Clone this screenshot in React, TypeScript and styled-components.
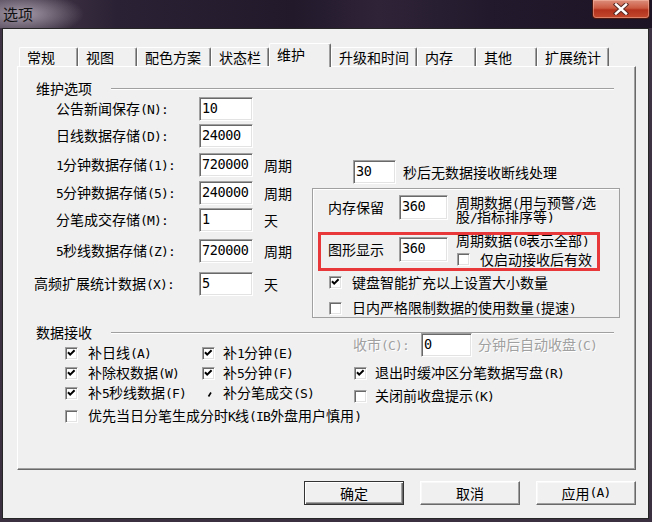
import React from "react";
import styled, { createGlobalStyle } from "styled-components";

const GlobalStyle = createGlobalStyle`
  html, body { margin: 0; padding: 0; background: #2a2030; }
  body {
    font-family: "Noto Sans CJK SC", "Noto Sans", sans-serif;
    font-size: 14px;
    color: #000;
  }
  * { box-sizing: border-box; }
`;

const Half = styled.span`
  font-family: "DejaVu Sans Mono", "Liberation Mono", monospace;
  font-size: 13px;
  letter-spacing: -0.8px;
`;

function T({ s }: { s: string }) {
  const parts = s.split(/([\x21-\x7e]+)/);
  return (
    <>
      {parts.map((p, i) =>
        /[\x21-\x7e]/.test(p) ? <Half key={i}>{p}</Half> : <React.Fragment key={i}>{p}</React.Fragment>
      )}
    </>
  );
}

const Window = styled.div`
  width: 652px;
  height: 522px;
  display: flex;
  flex-direction: column;
  background: linear-gradient(180deg, #3d3344 0%, #3a3040 100%);
  overflow: hidden;
`;

const TitleBar = styled.div`
  height: 28px;
  flex: none;
  display: flex;
  align-items: flex-start;
  justify-content: space-between;
  background:
    radial-gradient(ellipse 62px 22px at 22px 14px, rgba(175, 165, 178, 0.9), rgba(150, 140, 155, 0) 100%),
    linear-gradient(90deg, #4b4051 0%, #2b2134 18%, #22192b 45%, #2f2338 58%, #221a2c 75%, #1d1526 100%);
`;

const TitleText = styled.div`
  padding: 5px 0 0 3px;
  font-size: 15px;
  line-height: 18px;
  color: #111;
`;

const CloseButton = styled.div`
  width: 58px;
  height: 19px;
  margin-right: 2px;
  display: flex;
  align-items: center;
  justify-content: center;
  background: linear-gradient(180deg, #dc8e7c 0%, #cc5a42 45%, #b3321d 55%, #c4492d 100%);
  border: 1px solid #4a1810;
  border-top: none;
  border-radius: 0 0 4px 4px;
  box-shadow: inset 0 0 0 1px rgba(255, 200, 180, 0.45);
`;

const Client = styled.div`
  flex: 1;
  margin: 0 3px 3px 2px;
  border: 1px solid #262626;
  background: #f0f0f0;
  display: flex;
  flex-direction: column;
`;

const TabStrip = styled.div`
  display: flex;
  align-items: flex-end;
  height: 23px;
  margin: 14px 0 0 16px;
`;

const Tab = styled.div<{ $w: number; $active?: boolean }>`
  width: ${(p) => p.$w}px;
  height: ${(p) => (p.$active ? 24 : 19)}px;
  margin-bottom: ${(p) => (p.$active ? -1 : 0)}px;
  padding: ${(p) => (p.$active ? "3px 0 0 7px" : "2px 0 0 7px")};
  line-height: 14px;
  white-space: nowrap;
  background: #f0f0f0;
  border-top: 1px solid #fff;
  border-left: 1px solid #fff;
  border-right: 1px solid #696969;
  box-shadow: inset -1px 0 #a0a0a0;
  border-radius: 2px 2px 0 0;
  position: relative;
  z-index: ${(p) => (p.$active ? 2 : 0)};
`;

const Panel = styled.div`
  margin-left: 14px;
  width: 619px;
  height: 404px;
  flex: none;
  border-top: 1px solid #fff;
  border-left: 1px solid #fff;
  border-right: 1px solid #696969;
  border-bottom: 1px solid #696969;
  box-shadow: inset -1px -1px #a0a0a0;
  display: flex;
  flex-direction: column;
`;

const SectionHeader = styled.div<{ $mt: number }>`
  display: flex;
  align-items: center;
  gap: 19px;
  height: 14px;
  line-height: 14px;
  margin: ${(p) => p.$mt}px 21px 0 18px;
  white-space: nowrap;
`;

const Rule = styled.div`
  flex: 1;
  height: 2px;
  margin-top: 1px;
  border-top: 1px solid #a0a0a0;
  border-bottom: 1px solid #fff;
`;

const MainArea = styled.div`
  display: flex;
  margin-top: 2px;
`;

const LeftCol = styled.div`
  margin-left: 16px;
  width: 266px;
  display: flex;
  flex-direction: column;
`;

const FieldRow = styled.div<{ $mt: number }>`
  display: grid;
  grid-template-columns: 165px 54px auto;
  align-items: center;
  height: 24px;
  margin-top: ${(p) => p.$mt}px;
`;

const FieldLabel = styled.div<{ $indent: number }>`
  padding-left: ${(p) => p.$indent}px;
  white-space: nowrap;
  line-height: 14px;
`;

const Unit = styled.div`
  margin-left: 11px;
  line-height: 14px;
  white-space: nowrap;
`;

const TextBox = styled.input<{ $w: number; $h?: number }>`
  width: ${(p) => p.$w}px;
  height: ${(p) => p.$h ?? 24}px;
  flex: none;
  margin: 0;
  background: #fff;
  border-top: 1px solid #a0a0a0;
  border-left: 1px solid #a0a0a0;
  border-right: 1px solid #fff;
  border-bottom: 1px solid #fff;
  box-shadow: inset 1px 1px #696969, inset -1px -1px #e3e3e3;
  font-family: "DejaVu Sans Mono", "Liberation Mono", monospace;
  font-size: 13.5px;
  letter-spacing: -0.4px;
  color: #000;
  padding: 0 0 3px 2px;
  outline: none;
`;

const RightCol = styled.div`
  margin-left: 12px;
  width: 308px;
  display: flex;
  flex-direction: column;
`;

const TimeoutRow = styled.div`
  margin-top: 63px;
  padding-left: 41px;
  display: flex;
  align-items: center;
  gap: 7px;
  height: 24px;
  white-space: nowrap;
`;

const InnerBox = styled.div`
  margin-top: 4px;
  height: 130px;
  border: 1px solid #a0a0a0;
  box-shadow: inset 1px 1px #fff;
  display: flex;
  flex-direction: column;
`;

const BoxRow = styled.div<{ $mt: number }>`
  position: relative;
  display: flex;
  align-items: flex-start;
  margin-top: ${(p) => p.$mt}px;
  padding-left: 15px;
`;

const BoxLabel = styled.div`
  width: 71px;
  line-height: 25px;
  white-space: nowrap;
`;

const NoteBlock = styled.div<{ $mt: number }>`
  margin-left: 8px;
  margin-top: ${(p) => p.$mt}px;
  line-height: 13px;
  white-space: nowrap;
`;

const NoteCheck = styled.div`
  display: flex;
  align-items: center;
  gap: 10px;
  height: 17px;
  margin-top: 3px;
  padding-left: 1px;
`;

const Highlight = styled.div`
  position: absolute;
  left: 5px;
  top: -5px;
  width: 282px;
  height: 39px;
  border: 3px solid #e8383a;
  pointer-events: none;
`;

const CheckRow = styled.div<{ $mt: number; $pl: number; $gap?: number; $h?: number }>`
  display: flex;
  align-items: center;
  gap: ${(p) => p.$gap ?? 10}px;
  height: ${(p) => p.$h ?? 18}px;
  margin-top: ${(p) => p.$mt}px;
  padding-left: ${(p) => p.$pl}px;
  white-space: nowrap;
  line-height: 14px;
`;

const CheckBoxBox = styled.span`
  width: 13px;
  height: 13px;
  flex: none;
  display: inline-flex;
  background: #fff;
  border-top: 1px solid #a0a0a0;
  border-left: 1px solid #a0a0a0;
  border-right: 1px solid #fff;
  border-bottom: 1px solid #fff;
  box-shadow: inset 1px 1px #696969, inset -1px -1px #e3e3e3;
`;

const TickStub = styled.span`
  width: 13px;
  height: 13px;
  flex: none;
  display: inline-flex;
`;

function CheckBox({ checked }: { checked?: boolean }) {
  return (
    <CheckBoxBox>
      {checked && (
        <svg width="11" height="11" viewBox="0 0 11 11">
          <polyline points="2,4.2 4.2,6.6 8.6,2.2" fill="none" stroke="#000" strokeWidth="2" />
        </svg>
      )}
    </CheckBoxBox>
  );
}

const DataArea = styled.div`
  display: flex;
`;

const DataLeft = styled.div`
  margin-left: 47px;
  width: 288px;
  display: flex;
  flex-direction: column;
  margin-top: 4px;
`;

const CheckGrid = styled.div`
  display: grid;
  grid-template-columns: 137px auto;
  grid-auto-rows: 20px;
`;

const DataRight = styled.div`
  margin-top: -6px;
  display: flex;
  flex-direction: column;
`;

const CloseRow = styled.div`
  display: flex;
  align-items: center;
  height: 24px;
`;

const Disabled = styled.span<{ $w?: number; $ml?: number }>`
  color: #a0a0a0;
  text-shadow: 1px 1px 0 #fff;
  white-space: nowrap;
  line-height: 14px;
  ${(p) => (p.$w ? `width: ${p.$w}px;` : "")}
  margin-left: ${(p) => p.$ml ?? 0}px;
`;

const ButtonBar = styled.div`
  display: flex;
  justify-content: flex-end;
  gap: 16px;
  margin-top: 11px;
  padding-right: 12px;
`;

const Button = styled.div<{ $default?: boolean }>`
  width: 100px;
  height: 24px;
  display: flex;
  align-items: center;
  justify-content: center;
  background: #f0f0f0;
  line-height: 14px;
  border: 1px solid ${(p) => (p.$default ? "#333" : "#696969")};
  ${(p) =>
    p.$default
      ? "box-shadow: inset 1px 1px #fff, inset -1px -1px #696969, inset -2px -2px #a0a0a0;"
      : "border-top-color: #fff; border-left-color: #fff; box-shadow: inset -1px -1px #a0a0a0, inset 1px 1px #f8f8f8;"}
`;

const tabs = [
  { t: "常规", w: 59 },
  { t: "视图", w: 59 },
  { t: "配色方案", w: 74 },
  { t: "状态栏", w: 58 },
  { t: "维护", w: 62, active: true },
  { t: "升级和时间", w: 86 },
  { t: "内存", w: 59 },
  { t: "其他", w: 61 },
  { t: "扩展统计", w: 72 },
];

const fields = [
  { label: "公告新闻保存(N):", value: "10", unit: "", mt: 0, indent: 22 },
  { label: "日线数据存储(D):", value: "24000", unit: "", mt: 3, indent: 22 },
  { label: "1分钟数据存储(1):", value: "720000", unit: "周期", mt: 5, indent: 22 },
  { label: "5分钟数据存储(5):", value: "240000", unit: "周期", mt: 4, indent: 22 },
  { label: "分笔成交存储(M):", value: "1", unit: "天", mt: 3, indent: 22 },
  { label: "5秒线数据存储(Z):", value: "720000", unit: "周期", mt: 7, indent: 22 },
  { label: "高频扩展统计数据(X):", value: "5", unit: "天", mt: 9, indent: 0 },
];

export default function App() {
  return (
    <>
      <GlobalStyle />
      <Window>
        <TitleBar>
          <TitleText>选项</TitleText>
          <CloseButton>
            <svg width="16" height="12" viewBox="0 0 16 12">
              <path d="M3 1.5 L13 10.5 M13 1.5 L3 10.5" stroke="#5a2a24" strokeWidth="4.4" strokeLinecap="square" />
              <path d="M3 1.5 L13 10.5 M13 1.5 L3 10.5" stroke="#fff" strokeWidth="2.4" strokeLinecap="square" />
            </svg>
          </CloseButton>
        </TitleBar>
        <Client>
          <TabStrip>
            {tabs.map((tb) => (
              <Tab key={tb.t} $w={tb.w} $active={tb.active}>
                {tb.t}
              </Tab>
            ))}
          </TabStrip>
          <Panel>
            <SectionHeader $mt={14}>
              <span>维护选项</span>
              <Rule />
            </SectionHeader>
            <MainArea>
              <LeftCol>
                {fields.map((f) => (
                  <FieldRow key={f.label} $mt={f.mt}>
                    <FieldLabel $indent={f.indent}>
                      <T s={f.label} />
                    </FieldLabel>
                    <TextBox $w={54} value={f.value} readOnly />
                    <Unit>{f.unit}</Unit>
                  </FieldRow>
                ))}
              </LeftCol>
              <RightCol>
                <TimeoutRow>
                  <TextBox $w={43} value="30" readOnly />
                  <span>秒后无数据接收断线处理</span>
                </TimeoutRow>
                <InnerBox>
                  <BoxRow $mt={6}>
                    <BoxLabel>内存保留</BoxLabel>
                    <TextBox $w={49} $h={25} value="360" readOnly />
                    <NoteBlock $mt={1}>
                      <T s="周期数据(用与预警/选" />
                      <br />
                      <T s="股/指标排序等)" />
                    </NoteBlock>
                  </BoxRow>
                  <BoxRow $mt={13}>
                    <BoxLabel>图形显示</BoxLabel>
                    <TextBox $w={49} $h={25} value="360" readOnly />
                    <NoteBlock $mt={-3}>
                      <T s="周期数据(0表示全部)" />
                      <NoteCheck>
                        <CheckBox />
                        <span>仅启动接收后有效</span>
                      </NoteCheck>
                    </NoteBlock>
                    <Highlight />
                  </BoxRow>
                  <CheckRow $mt={5} $pl={16}>
                    <CheckBox checked />
                    <span>键盘智能扩充以上设置大小数量</span>
                  </CheckRow>
                  <CheckRow $mt={8} $pl={16}>
                    <CheckBox />
                    <span>
                      <T s="日内严格限制数据的使用数量(提速)" />
                    </span>
                  </CheckRow>
                </InnerBox>
              </RightCol>
            </MainArea>
            <SectionHeader $mt={7}>
              <span>数据接收</span>
              <Rule />
            </SectionHeader>
            <DataArea>
              <DataLeft>
                <CheckGrid>
                  <CheckRow $mt={0} $pl={0} $h={20}>
                    <CheckBox checked />
                    <span><T s="补日线(A)" /></span>
                  </CheckRow>
                  <CheckRow $mt={0} $pl={0} $h={20} $gap={8}>
                    <CheckBox checked />
                    <span><T s="补1分钟(E)" /></span>
                  </CheckRow>
                  <CheckRow $mt={0} $pl={0} $h={20}>
                    <CheckBox checked />
                    <span><T s="补除权数据(W)" /></span>
                  </CheckRow>
                  <CheckRow $mt={0} $pl={0} $h={20} $gap={8}>
                    <CheckBox checked />
                    <span><T s="补5分钟(F)" /></span>
                  </CheckRow>
                  <CheckRow $mt={0} $pl={0} $h={20}>
                    <CheckBox checked />
                    <span><T s="补5秒线数据(F)" /></span>
                  </CheckRow>
                  <CheckRow $mt={0} $pl={0} $h={20} $gap={8}>
                    <TickStub>
                      <svg width="13" height="13" viewBox="0 0 13 13">
                        <path d="M6.5 9.5 L9 5.5" stroke="#000" strokeWidth="1.6" />
                      </svg>
                    </TickStub>
                    <span><T s="补分笔成交(S)" /></span>
                  </CheckRow>
                </CheckGrid>
                <CheckRow $mt={3} $pl={0} $h={20}>
                  <CheckBox />
                  <span><T s="优先当日分笔生成分时K线(IB外盘用户慎用)" /></span>
                </CheckRow>
              </DataLeft>
              <DataRight>
                <CloseRow>
                  <Disabled $w={68}><T s="收市(C):" /></Disabled>
                  <TextBox $w={51} value="0" readOnly />
                  <Disabled $ml={6}><T s="分钟后自动收盘(C)" /></Disabled>
                </CloseRow>
                <CheckRow $mt={6} $pl={1} $h={20} $gap={8}>
                  <CheckBox checked />
                  <span><T s="退出时缓冲区分笔数据写盘(R)" /></span>
                </CheckRow>
                <CheckRow $mt={3} $pl={1} $h={20} $gap={8}>
                  <CheckBox />
                  <span><T s="关闭前收盘提示(K)" /></span>
                </CheckRow>
              </DataRight>
            </DataArea>
          </Panel>
          <ButtonBar>
            <Button $default>确定</Button>
            <Button>取消</Button>
            <Button><T s="应用(A)" /></Button>
          </ButtonBar>
        </Client>
      </Window>
    </>
  );
}
